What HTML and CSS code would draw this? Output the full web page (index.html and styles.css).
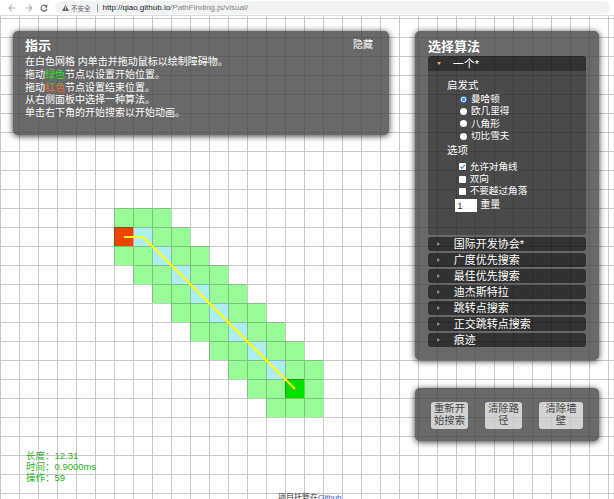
FILE: index.html
```html
<!DOCTYPE html>
<html lang="zh-CN">
<head>
<meta charset="utf-8">
<title>PathFinding.js</title>
<link rel="stylesheet" href="styles.css">
</head>
<body>
<header class="topbar">
  <svg class="nav-icon dim" width="8" height="8" viewBox="0 0 8 8"><path d="M7.5 4H1M4 1L1 4l3 3"/></svg>
  <svg class="nav-icon dim fwd" width="8" height="8" viewBox="0 0 8 8"><path d="M0.5 4H7M4 1l3 3-3 3"/></svg>
  <svg class="nav-icon reload" width="8" height="8" viewBox="0 0 8 8"><path d="M6.1 1.9A3 3 0 1 0 7 5"/><path class="fill" d="M7.4 0.4V3.4H4.4Z"/></svg>
  <div class="omnibox">
    <svg class="warn" width="7" height="6" viewBox="0 0 7 6"><path d="M3.5 0L7 6H0Z"/><rect class="mark" x="3.1" y="1.8" width="0.8" height="2.2"/><rect class="mark" x="3.1" y="4.5" width="0.8" height="0.8"/></svg>
    <span class="not-secure">不安全</span>
    <span class="sep"></span>
    <span class="url"><span class="host">http://qiao.github.io</span><span class="path">/PathFinding.js/visual/</span></span>
  </div>
</header>

<main class="stage">
  <svg class="grid" width="614" height="483" viewBox="0 0 614 483">
    <defs>
      <pattern id="lines" x="0" y="2" width="19" height="19" patternUnits="userSpaceOnUse">
        <rect class="line" x="0" y="0" width="19" height="1"/>
        <rect class="line" x="0" y="1" width="1" height="18"/>
      </pattern>
    </defs>
    <rect class="bg" width="614" height="483"/>
    <g>
      <rect class="o" x="114" y="192" width="19" height="19"/>
      <rect class="o" x="133" y="192" width="19" height="19"/>
      <rect class="o" x="152" y="192" width="19" height="19"/>

      <rect class="e" x="114" y="211" width="19" height="19"/>
      <rect class="c" x="133" y="211" width="19" height="19"/>
      <rect class="o" x="152" y="211" width="19" height="19"/>
      <rect class="o" x="171" y="211" width="19" height="19"/>

      <rect class="o" x="114" y="230" width="19" height="19"/>
      <rect class="o" x="133" y="230" width="19" height="19"/>
      <rect class="c" x="152" y="230" width="19" height="19"/>
      <rect class="o" x="171" y="230" width="19" height="19"/>
      <rect class="o" x="190" y="230" width="19" height="19"/>

      <rect class="o" x="133" y="249" width="19" height="19"/>
      <rect class="o" x="152" y="249" width="19" height="19"/>
      <rect class="c" x="171" y="249" width="19" height="19"/>
      <rect class="o" x="190" y="249" width="19" height="19"/>
      <rect class="o" x="209" y="249" width="19" height="19"/>

      <rect class="o" x="152" y="268" width="19" height="19"/>
      <rect class="o" x="171" y="268" width="19" height="19"/>
      <rect class="c" x="190" y="268" width="19" height="19"/>
      <rect class="o" x="209" y="268" width="19" height="19"/>
      <rect class="o" x="228" y="268" width="19" height="19"/>

      <rect class="o" x="171" y="287" width="19" height="19"/>
      <rect class="o" x="190" y="287" width="19" height="19"/>
      <rect class="c" x="209" y="287" width="19" height="19"/>
      <rect class="o" x="228" y="287" width="19" height="19"/>
      <rect class="o" x="247" y="287" width="19" height="19"/>

      <rect class="o" x="190" y="306" width="19" height="19"/>
      <rect class="o" x="209" y="306" width="19" height="19"/>
      <rect class="c" x="228" y="306" width="19" height="19"/>
      <rect class="o" x="247" y="306" width="19" height="19"/>
      <rect class="o" x="266" y="306" width="19" height="19"/>

      <rect class="o" x="209" y="325" width="19" height="19"/>
      <rect class="o" x="228" y="325" width="19" height="19"/>
      <rect class="c" x="247" y="325" width="19" height="19"/>
      <rect class="o" x="266" y="325" width="19" height="19"/>
      <rect class="o" x="285" y="325" width="19" height="19"/>

      <rect class="o" x="228" y="344" width="19" height="19"/>
      <rect class="o" x="247" y="344" width="19" height="19"/>
      <rect class="c" x="266" y="344" width="19" height="19"/>
      <rect class="o" x="285" y="344" width="19" height="19"/>
      <rect class="o" x="304" y="344" width="19" height="19"/>

      <rect class="o" x="247" y="363" width="19" height="19"/>
      <rect class="o" x="266" y="363" width="19" height="19"/>
      <rect class="s" x="285" y="363" width="19" height="19"/>
      <rect class="o" x="304" y="363" width="19" height="19"/>

      <rect class="o" x="266" y="382" width="19" height="19"/>
      <rect class="o" x="285" y="382" width="19" height="19"/>
      <rect class="o" x="304" y="382" width="19" height="19"/>
    </g>
    <rect width="614" height="483" fill="url(#lines)"/>
    <polyline class="route" points="124,221 143,221 295,373"/>
  </svg>

  <section class="panel instructions">
    <div class="panel-head">
      <h2 class="panel-title">指示</h2>
      <span class="hide-link">隐藏</span>
    </div>
    <p class="instructions-body">在白色网格 内单击并拖动鼠标以绘制障碍物。<br>拖动<span class="green-text">绿色</span>节点以设置开始位置。<br>拖动<span class="red-text">红色</span>节点设置结束位置。<br>从右侧面板中选择一种算法。<br>单击右下角的开始搜索以开始动画。</p>
  </section>

  <section class="panel algorithms">
    <h2 class="panel-title">选择算法</h2>
    <div class="accordion">
      <div class="acc-head open"><span class="arrow arrow-down"></span>一个*</div>
      <div class="acc-body">
        <div class="group-label">启发式</div>
        <div class="options radios">
          <div class="option"><span class="radio on"></span>曼哈顿</div>
          <div class="option"><span class="radio"></span>欧几里得</div>
          <div class="option"><span class="radio"></span>八角形</div>
          <div class="option"><span class="radio"></span>切比雪夫</div>
        </div>
        <div class="group-label second">选项</div>
        <div class="options checks">
          <div class="option"><span class="check on"><svg width="7" height="7" viewBox="0 0 7 7"><path d="M1.2 3.6L2.9 5.3 6 1.6"/></svg></span>允许对角线</div>
          <div class="option"><span class="check"></span>双向</div>
          <div class="option"><span class="check"></span>不要越过角落</div>
        </div>
        <div class="weight-row"><span class="weight-input">1</span>重量</div>
      </div>
      <div class="acc-head"><span class="arrow arrow-right"></span>国际开发协会*</div>
      <div class="acc-head"><span class="arrow arrow-right"></span>广度优先搜索</div>
      <div class="acc-head"><span class="arrow arrow-right"></span>最佳优先搜索</div>
      <div class="acc-head"><span class="arrow arrow-right"></span>迪杰斯特拉</div>
      <div class="acc-head"><span class="arrow arrow-right"></span>跳转点搜索</div>
      <div class="acc-head"><span class="arrow arrow-right"></span>正交跳转点搜索</div>
      <div class="acc-head"><span class="arrow arrow-right"></span>痕迹</div>
    </div>
  </section>

  <section class="panel actions">
    <div class="btn">重新开<br>始搜索</div>
    <div class="btn">清除路<br>径</div>
    <div class="btn wide">清除墙<br>壁</div>
  </section>

  <div class="stats">长度：12.31<br>时间：0.9000ms<br>操作：59</div>

  <footer class="footer">项目托管在<a href="#">Github</a></footer>
</main>
</body>
</html>
```

FILE: styles.css
```css
* { box-sizing: border-box; }
html, body { margin: 0; padding: 0; }
body {
  width: 614px;
  height: 499px;
  overflow: hidden;
  background: #fff;
  font-family: "Liberation Sans", "Noto Sans CJK SC", sans-serif;
}

/* browser bar */
.topbar {
  height: 16px;
  display: flex;
  align-items: center;
  padding-left: 8px;
  background: #fff;
  border-bottom: 1px solid #dcdcdc;
}
.nav-icon { display: block; flex: none; fill: none; stroke: #b0b3b7; stroke-width: 1.1; }
.nav-icon.fwd { margin-left: 9px; }
.nav-icon.reload { margin-left: 7px; stroke: #5f6368; }
.nav-icon .fill { fill: #5f6368; stroke: none; }
.omnibox {
  margin-left: 7px;
  height: 13px;
  width: 555px;
  background: #f1f3f4;
  border-radius: 7px;
  display: flex;
  align-items: center;
  padding-left: 7px;
}
.warn { display: block; fill: #5f6368; }
.warn .mark { fill: #f1f3f4; }
.not-secure { margin-left: 2px; font-size: 6.5px; color: #5f6368; }
.sep { width: 1px; height: 8px; background: #9aa0a6; margin: 0 5px 0 6px; }
.url { font-size: 8px; white-space: nowrap; }
.host { color: #202124; }
.path { color: #80868b; }

/* grid canvas */
.stage { position: relative; width: 614px; height: 483px; }
.grid { display: block; }
.grid .bg { fill: #fff; }
.grid .line { fill: #000; fill-opacity: 0.21; }
.grid .o { fill: #98fb98; }
.grid .c { fill: #afeeee; }
.grid .s { fill: #00dd00; }
.grid .e { fill: #ee4400; }
.grid .route { fill: none; stroke: #ffff00; stroke-width: 2; stroke-linejoin: round; }

/* panels */
.panel {
  position: absolute;
  background: #444;
  opacity: 0.8;
  border-radius: 5px;
  box-shadow: 0 1px 6px #000;
  color: #fff;
}
.panel-title { margin: 0; font-size: 13px; line-height: 16px; font-weight: bold; }

.instructions { left: 13px; top: 15px; width: 376px; height: 104px; padding: 7px 16px 0 12px; }
.panel-head { display: flex; justify-content: space-between; align-items: flex-start; }
.hide-link { font-size: 10px; line-height: 12px; margin-top: 1px; }
.instructions-body { margin: 2px 0 0; font-size: 10px; line-height: 12.8px; }
.green-text { color: #00dd00; }
.red-text { color: #ee4400; }

.algorithms { left: 415px; top: 15px; width: 184px; height: 329px; padding: 8px 13px 0; }
.algorithms .panel-title { margin-bottom: 1px; }
.acc-head {
  height: 14px;
  margin-top: 2px;
  background: #000;
  border-radius: 3px;
  display: flex;
  align-items: center;
  font-size: 11px;
  line-height: 14px;
  white-space: nowrap;
}
.acc-head.open { height: 15px; margin-top: 0; border-radius: 3px 3px 0 0; }
.arrow { width: 0; height: 0; border-style: solid; flex: none; }
.arrow-right {
  border-width: 2.5px 0 2.5px 3px;
  border-color: transparent transparent transparent #7d7d7d;
  margin-left: 9px;
  margin-right: 13.7px;
}
.arrow-down {
  border-width: 3px 2.5px 0 2.5px;
  border-color: #f29a1c transparent transparent transparent;
  margin-left: 8.5px;
  margin-right: 12.2px;
}
.acc-body {
  height: 164px;
  background: #1d1d1d;
  border-radius: 0 0 3px 3px;
  padding-top: 8px;
  font-size: 10px;
  line-height: 12.4px;
}
.group-label { padding-left: 19px; font-size: 10.5px; }
.group-label.second { margin-top: 1.4px; }
.radios { margin-top: 1.6px; }
.checks { margin-top: 4.3px; }
.option { display: flex; align-items: center; height: 12.4px; font-size: 9.6px; }
.radios .option { padding-left: 31.5px; }
.checks .option { padding-left: 30.7px; }
.radio {
  width: 7px; height: 7px; border-radius: 50%;
  background: #fff; margin-right: 4.5px; flex: none;
}
.radio.on {
  border: 1px solid #1a73e8;
  background: radial-gradient(circle, #1a73e8 0 1.4px, #fff 1.7px);
}
.check {
  width: 7px; height: 7px; background: #fff; margin-right: 4px; flex: none;
  display: flex; border-radius: 1px;
}
.check svg { display: block; fill: none; stroke: #1a73e8; stroke-width: 1.2; }
.weight-row { display: flex; align-items: center; height: 14px; padding-left: 27.3px; margin-top: 0.3px; font-size: 10px; }
.weight-input {
  width: 22px; height: 13px; background: #fff; color: #000;
  font-size: 9.5px; line-height: 13px; padding-left: 2px; margin-right: 3px;
}

.actions {
  left: 415px; top: 372px; width: 184px; height: 53px;
  padding: 13.5px 0 0 16px;
  display: flex; align-items: flex-start; gap: 17px;
}
.btn {
  width: 37px; height: 27px;
  background: #c8c8c8; color: #111;
  border-radius: 3px;
  font-size: 10.3px; line-height: 12.3px;
  display: flex; align-items: center; justify-content: center;
  text-align: center;
}
.btn.wide { width: 44px; }

.stats {
  position: absolute; left: 26px; top: 433.5px;
  font-size: 9.5px; line-height: 11px; color: #22b322;
}
.footer {
  position: absolute; left: 278px; top: 477px;
  font-size: 8px; line-height: 10px; color: #333;
}
.footer a { color: #3b5bdb; text-decoration: none; }
```
